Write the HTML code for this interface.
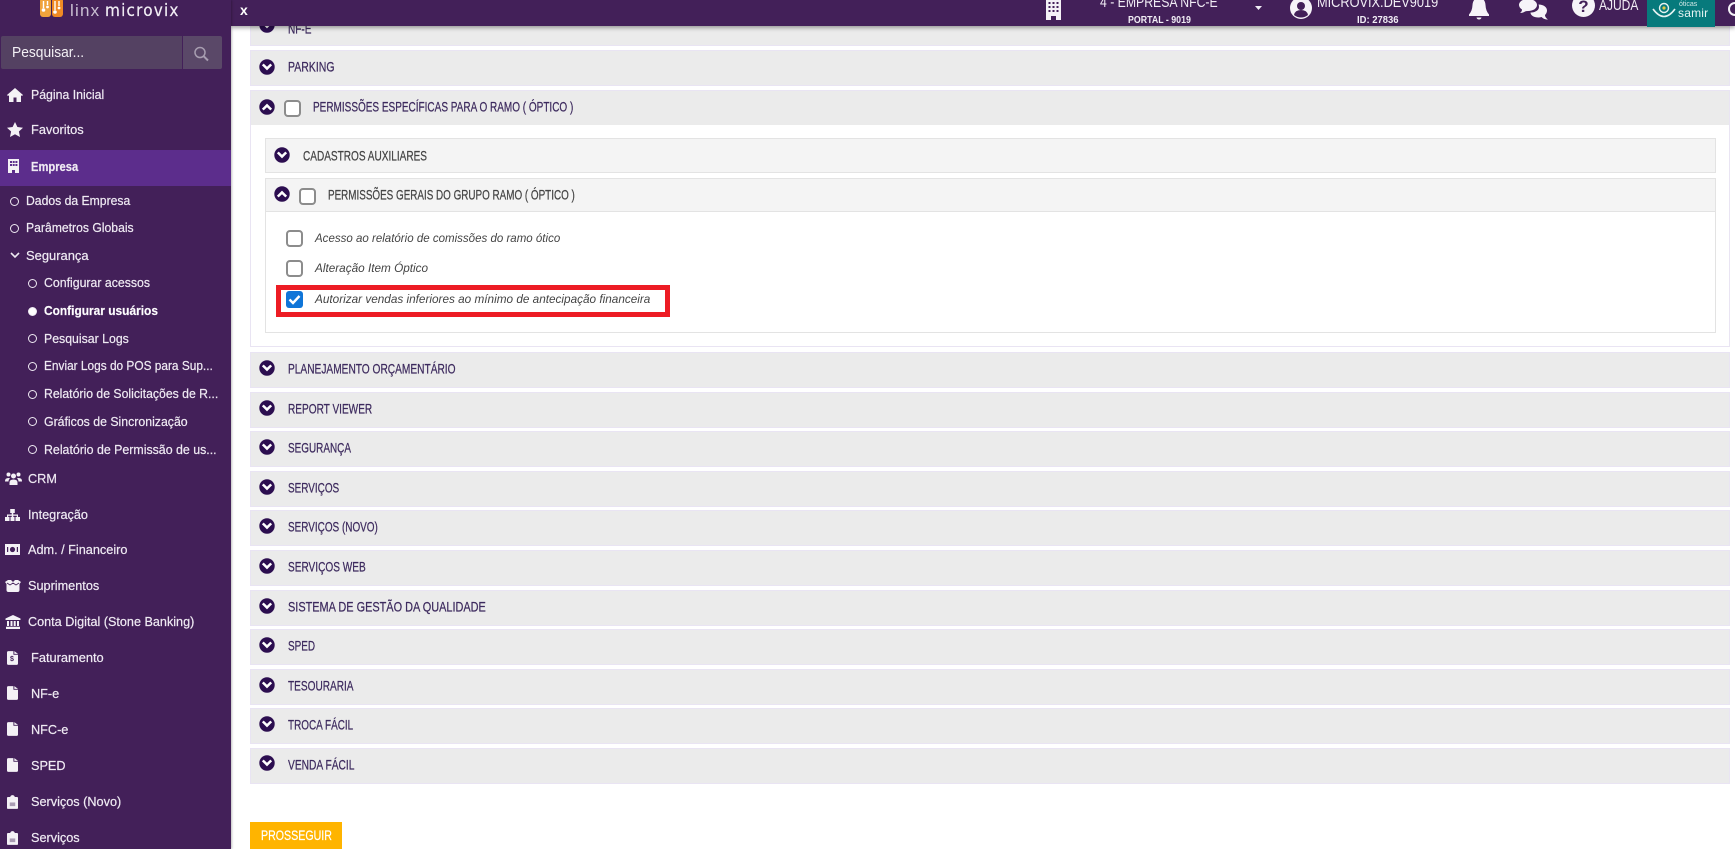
<!DOCTYPE html>
<html lang="pt-BR"><head><meta charset="utf-8"><title>Linx Microvix</title>
<style>
*{box-sizing:border-box}
html,body{margin:0;padding:0;width:1735px;height:849px;overflow:hidden;background:#fff;font-family:"Liberation Sans",sans-serif}
.a{position:absolute}
#side{position:absolute;left:0;top:0;width:231px;height:849px;background:#432059;box-shadow:1px 0 2px rgba(0,0,0,.25);z-index:3}
#top{position:absolute;left:231px;top:0;width:1504px;height:26px;background:#432059;box-shadow:0 2px 4px rgba(0,0,0,.35);z-index:2}
.m{position:absolute;white-space:nowrap;color:#efeaf3;font-size:12.7px;line-height:16px;height:16px;transform-origin:left center;transform:scaleX(var(--s,1));-webkit-text-stroke:.2px #efeaf3}
.ic{position:absolute;fill:#f4f1f6}
.dot{position:absolute;width:9px;height:9px;border:1.4px solid #efeaf3;border-radius:50%}
.p{position:absolute;left:250px;width:1480px;background:#ebebeb;border:1.5px solid #e9e4f3;height:36px}
.t{position:absolute;white-space:nowrap;font-size:14px;line-height:16px;color:#3d2a5e;transform-origin:left center;transform:translateY(-.7px) scaleX(var(--s,.72));-webkit-text-stroke:.25px #3d2a5e}
.ck{position:absolute;width:17px;height:17px;background:#fff;border:2px solid #8c8c8c;border-radius:4px}
.i{position:absolute;white-space:nowrap;font-style:italic;font-size:12px;line-height:16px;color:#444;transform-origin:left center;transform:scaleX(var(--s,.98))}
.tw{position:absolute;white-space:nowrap;color:#f1edf5;transform-origin:left center;transform:scaleX(var(--s,1))}
svg{display:block}
</style></head><body>
<svg width="0" height="0" style="position:absolute"><defs>
<symbol id="cd" viewBox="0 0 16 16"><circle cx="8" cy="8" r="7.700" fill="#2c0e50"/><path d="M2.900 6.300 8 11.400l5.100-5.100-1.800-1.700L8 7.800 4.700 4.600z" fill="#fff"/></symbol>
<symbol id="cu" viewBox="0 0 16 16"><circle cx="8" cy="8" r="7.700" fill="#2c0e50"/><path d="M2.900 9.700 8 4.600l5.100 5.100-1.800 1.700L8 8.200l-3.300 3.200z" fill="#fff"/></symbol>
<symbol id="doc" viewBox="0 0 12 15"><path d="M0 1.500Q0 0 1.500 0H7v4h5v9.500Q12 15 10.500 15h-9Q0 15 0 13.500zM8 0l4 3H8z"/></symbol>
<symbol id="clip" viewBox="0 0 12 15"><path d="M1 2h2.500Q4 0 6 0t2.500 2H11q1 0 1 1v11q0 1-1 1H1q-1 0-1-1V3q0-1 1-1z"/><path d="M3 8h6v4H3z" fill="#a99bb3"/></symbol>
</defs></svg>

<div id="top"></div>
<div id="side"></div>

<!-- Logo -->
<svg class="a" style="left:40px;top:0;z-index:4" width="23" height="18" viewBox="0 0 23 18"><rect x="0" y="-2" width="11" height="19" rx="3" fill="#f0a33c"/><rect x="12" y="-2" width="11" height="19" rx="3" fill="#f08a24"/><path d="M3.500 1v7M7.500 1v4M15 1v9M19 1v5" stroke="#fff" stroke-width="1.400" fill="none"/><circle cx="3.500" cy="10" r="1.800" fill="#fff"/><circle cx="7.500" cy="7" r="1.400" fill="#fff"/><circle cx="15" cy="12" r="1.800" fill="#fff"/><circle cx="19" cy="8" r="1.400" fill="#fff"/></svg>
<div class="a" style="left:70px;top:1px;z-index:4;color:#c9bfd2;font-size:17px;line-height:20px;letter-spacing:1.200px;white-space:nowrap">linx</div>
<div class="a" style="left:105px;top:1px;z-index:4;color:#f2eef5;font-size:17px;line-height:20px;letter-spacing:1.300px;white-space:nowrap;font-family:'DejaVu Sans',sans-serif;transform:scaleX(.9);transform-origin:left;-webkit-text-stroke:.2px #f2eef5">microvix</div>

<!-- Search -->
<div class="a" style="left:1px;top:36px;width:181px;height:33px;background:#544162;border-radius:2px 0 0 2px;z-index:4"></div>
<div class="a" style="left:12px;top:36px;z-index:4;color:#f3f0f5;font-size:15px;line-height:33px;transform:scaleX(.92);transform-origin:left;white-space:nowrap">Pesquisar...</div>
<div class="a" style="left:183px;top:36px;width:39px;height:33px;background:#5a4868;border-radius:0 2px 2px 0;z-index:4"></div>
<svg class="a" style="left:193px;top:46px;z-index:4" width="17" height="16" viewBox="0 0 17 16"><circle cx="7" cy="6.500" r="5" fill="none" stroke="#a79db0" stroke-width="1.500"/><path d="M10.800 10.300 15 14.500" stroke="#a79db0" stroke-width="2"/></svg>

<div class="a" style="left:0;top:150px;width:231px;height:36px;background:#5c2d8c;z-index:4"></div>

<div style="position:absolute;left:0;top:0;z-index:5">
<svg class="ic" style="left:7px;top:88px" width="16" height="14" viewBox="0 0 16 14"><path d="M8 0 0 7l1 1 1-.8V14h4.500V9.500h3V14H14V7.200l1 .8 1-1z"/></svg>
<div class="m" style="left:31px;top:87px;--s:.97">Página Inicial</div>
<svg class="ic" style="left:7px;top:122px" width="16" height="15" viewBox="0 0 16 15"><path d="M8 0l2.400 5 5.600.7-4.100 3.800 1.100 5.500L8 12.300 3 15l1.100-5.500L0 5.700 5.600 5z"/></svg>
<div class="m" style="left:31px;top:122px;--s:1.01">Favoritos</div>
<svg class="ic" style="left:8px;top:159px" width="11" height="14" viewBox="0 0 11 14"><path d="M0 0h11v14H7v-3H4v3H0z"/><path d="M2 2h2v2H2zM4.700 2h2v2h-2zM7.400 2h2v2h-2zM2 5h2v2H2zM4.700 5h2v2h-2zM7.400 5h2v2h-2z" fill="#5c2d8c"/></svg>
<div class="m" style="left:31px;top:159px;font-weight:700;--s:.88">Empresa</div>

<div class="dot" style="left:10px;top:197px"></div><div class="m" style="left:26px;top:193px;--s:.96">Dados da Empresa</div>
<div class="dot" style="left:10px;top:224px"></div><div class="m" style="left:26px;top:220px;--s:.96">Parâmetros Globais</div>
<svg class="a" style="left:10px;top:252px" width="10" height="7" viewBox="0 0 10 7"><path d="M1 1l4 4 4-4" fill="none" stroke="#efeaf3" stroke-width="1.600"/></svg>
<div class="m" style="left:26px;top:248px;--s:1.02">Segurança</div>

<div class="dot" style="left:28px;top:279px"></div><div class="m" style="left:44px;top:275px;--s:.97">Configurar acessos</div>
<div class="dot" style="left:28px;top:307px;background:#fff"></div><div class="m" style="left:44px;top:303px;font-weight:700;--s:.94;color:#fff">Configurar usuários</div>
<div class="dot" style="left:28px;top:334px"></div><div class="m" style="left:44px;top:331px;--s:.97">Pesquisar Logs</div>
<div class="dot" style="left:28px;top:362px"></div><div class="m" style="left:44px;top:358px;--s:.935">Enviar Logs do POS para Sup...</div>
<div class="dot" style="left:28px;top:390px"></div><div class="m" style="left:44px;top:386px;--s:.965">Relatório de Solicitações de R...</div>
<div class="dot" style="left:28px;top:417px"></div><div class="m" style="left:44px;top:414px;--s:.97">Gráficos de Sincronização</div>
<div class="dot" style="left:28px;top:445px"></div><div class="m" style="left:44px;top:442px;--s:.975">Relatório de Permissão de us...</div>

<svg class="ic" style="left:5px;top:472px" width="17" height="13" viewBox="0 0 17 13"><circle cx="3.500" cy="2.500" r="2"/><circle cx="13.500" cy="2.500" r="2"/><circle cx="8.500" cy="4" r="2.500"/><path d="M0 9q0-3 3.500-3 1 0 1.500.5Q3.500 7.500 3.500 9.500H0zM17 9q0-3-3.500-3-1 0-1.500.5 1.500 1 1.500 3H17zM4.500 13v-2.500q0-3 4-3t4 3V13z"/></svg>
<div class="m" style="left:28px;top:471px">CRM</div>
<svg class="ic" style="left:5px;top:509px" width="15" height="12" viewBox="0 0 15 12"><path d="M5.200 0h4.600v4H8.300v1.500h4.700V8h2v4h-4.500V8h1.300V6.800H8.300V8h1.200v4h-4V8h1.200V6.800H3.200V8h1.300v4H0V8h2V5.500h4.700V4H5.200z"/></svg>
<div class="m" style="left:28px;top:507px">Integração</div>
<svg class="a" style="left:5px;top:544px" width="15" height="11" viewBox="0 0 15 11"><rect width="15" height="11" fill="#f4f1f6"/><circle cx="7.500" cy="5.500" r="2.600" fill="#432059"/><path d="M2 3h1.200v5H2zM11.800 3H13v5h-1.200z" fill="#432059"/></svg>
<div class="m" style="left:28px;top:542px">Adm. / Financeiro</div>
<svg class="ic" style="left:5px;top:580px" width="16" height="12" viewBox="0 0 16 12"><path d="M0 2 3 0h3L8 2l2-2h3l3 2-1.500 2v6q0 2-2 2h-9q-2 0-2-2V4z"/><path d="M2 3l3 2L8 3l3 2 3-2" stroke="#432059" fill="none" stroke-width=".9"/></svg>
<div class="m" style="left:28px;top:578px">Suprimentos</div>
<svg class="ic" style="left:5px;top:615px" width="16" height="14" viewBox="0 0 16 14"><path d="M8 0l7.500 3.500V5H.5V3.500zM2 6h2v5H2zM5.500 6h2v5h-2zM8.700 6h2v5h-2zM12 6h2v5h-2zM1 11.800h14V14H1z"/></svg>
<div class="m" style="left:28px;top:614px;--s:.995">Conta Digital (Stone Banking)</div>
<svg class="ic" style="left:7px;top:651px" width="11" height="14"><use href="#doc"/></svg>
<div class="a" style="left:10px;top:656px;font-size:7px;line-height:8px;color:#432059;font-weight:700">$</div>
<div class="m" style="left:31px;top:650px;--s:1.01">Faturamento</div>
<svg class="ic" style="left:7px;top:686px" width="11" height="14"><use href="#doc"/></svg>
<div class="m" style="left:31px;top:686px">NF-e</div>
<svg class="ic" style="left:7px;top:722px" width="11" height="14"><use href="#doc"/></svg>
<div class="m" style="left:31px;top:722px">NFC-e</div>
<svg class="ic" style="left:7px;top:758px" width="11" height="14"><use href="#doc"/></svg>
<div class="m" style="left:31px;top:758px">SPED</div>
<svg class="ic" style="left:7px;top:795px" width="11" height="14"><use href="#clip"/></svg>
<div class="m" style="left:31px;top:794px">Serviços (Novo)</div>
<svg class="ic" style="left:7px;top:831px" width="11" height="14"><use href="#clip"/></svg>
<div class="m" style="left:31px;top:830px">Serviços</div>
</div>

<!-- Top bar contents -->
<div style="position:absolute;left:0;top:0;z-index:6">
<div class="a" style="left:240px;top:2px;color:#fff;font-size:14px;font-weight:700;line-height:16px">x</div>
<svg class="a" style="left:1046px;top:0" width="15" height="20" viewBox="0 0 15 20"><path d="M0-1h15v21h-5v-4H5v4H0z" fill="#f4f1f6"/><path d="M2.500 2h2v2h-2zM6.500 2h2v2h-2zM10.500 2h2v2h-2zM2.500 6h2v2h-2zM6.500 6h2v2h-2zM10.500 6h2v2h-2zM2.500 10h2v2h-2zM6.500 10h2v2h-2zM10.500 10h2v2h-2z" fill="#432059"/></svg>
<div class="tw" style="left:1100px;top:-5px;font-size:15px;line-height:16px;--s:.816">4 - EMPRESA NFC-E</div>
<div class="tw" style="left:1128px;top:14px;font-size:10.500px;line-height:12px;font-weight:700;--s:.84">PORTAL - 9019</div>
<svg class="a" style="left:1255px;top:6px" width="7" height="4"><path d="M0 0h7L3.500 4z" fill="#f1edf5"/></svg>
<svg class="a" style="left:1290px;top:-3px" width="22" height="22" viewBox="0 0 22 22"><circle cx="11" cy="11" r="11" fill="#f6f3f8"/><circle cx="11" cy="9" r="4" fill="#432059"/><path d="M4 18q1-5 7-5t7 5q-3 2.500-7 2.500T4 18z" fill="#432059"/></svg>
<div class="tw" style="left:1317px;top:-5px;font-size:15px;line-height:16px;--s:.85">MICROVIX.DEV9019</div>
<div class="tw" style="left:1357px;top:13.500px;font-size:10.500px;line-height:12px;font-weight:700;--s:.9">ID: 27836</div>
<svg class="a" style="left:1469px;top:-2px" width="20" height="22" viewBox="0 0 20 22"><path d="M10 0q6 0 6.500 7 .3 6 3.500 9.500V18H0v-1.500Q3.200 13 3.500 7 4 0 10 0z" fill="#f6f3f8"/><path d="M7.500 19.500h5q-.5 2-2.500 2t-2.500-2z" fill="#f6f3f8"/></svg>
<svg class="a" style="left:1519px;top:-1px" width="29" height="21" viewBox="0 0 29 21"><path d="M9 0c5 0 9 2.500 9 6s-4 6-9 6q-2 0-3 .5Q4 14 1 14q2-1.500 2-3.500Q0 8.500 0 6c0-3.500 4-6 9-6z" fill="#f6f3f8"/><path d="M19.500 5.500c5 0 8.500 2.500 8.500 6 0 2-1 3.500-2 4.500 0 2 1.500 3.500 3 4.500-3 0-5-1-6.500-2.500q-1.500.5-3 .5c-4.500 0-8-2-8-5 5.500 0 10-3 8-8z" fill="#f6f3f8"/></svg>
<svg class="a" style="left:1572px;top:-6px" width="23" height="23" viewBox="0 0 23 23"><circle cx="11.500" cy="11.500" r="11.500" fill="#f6f3f8"/><text x="11.500" y="18" text-anchor="middle" font-family="Liberation Sans" font-weight="700" font-size="17" fill="#432059">?</text></svg>
<div class="tw" style="left:1599px;top:-2px;font-size:15px;line-height:16px;--s:.8">AJUDA</div>
<div class="a" style="left:1647px;top:0;width:68px;height:27px;background:#077a7c"></div>
<svg class="a" style="left:1650px;top:1px" width="28" height="20" viewBox="0 0 28 20"><path d="M3 8q11 15 22 0" fill="none" stroke="#e6f3f2" stroke-width="1.600"/><circle cx="14" cy="7" r="4.500" fill="none" stroke="#e6f3f2" stroke-width="1.400"/><circle cx="14" cy="7" r="1.600" fill="#e3c843"/></svg>
<div class="a" style="left:1679px;top:1px;color:#cfe7e6;font-size:7px;line-height:8px;white-space:nowrap">óticas</div>
<div class="a" style="left:1678px;top:7px;color:#e6f3f2;font-size:12px;line-height:13px;white-space:nowrap;letter-spacing:.2px">samir</div>
<div class="a" style="left:1728px;top:2px;width:14px;height:14px;border:2px solid #f4f1f6;border-radius:50%"></div>
</div>

<!-- Panels -->
<div class="p" style="top:10px;border-top:0"></div>
<svg class="a" style="left:259px;top:17px;z-index:1" width="16" height="16"><use href="#cd"/></svg>
<div class="t" style="left:288px;top:21px">NF-E</div>

<div class="p" style="top:50px"></div>
<svg class="a" style="left:259px;top:59px" width="16" height="16"><use href="#cd"/></svg>
<div class="t" style="left:288px;top:59px;--s:.75">PARKING</div>

<div class="p" style="top:90px;height:257px;background:#fff"></div>
<div class="a" style="left:251px;top:91px;width:1478px;height:34px;background:#ebebeb"></div>
<svg class="a" style="left:259px;top:99px" width="16" height="16"><use href="#cu"/></svg>
<div class="ck" style="left:284px;top:100px"></div>
<div class="t" style="left:313px;top:99px;--s:.714">PERMISSÕES ESPECÍFICAS PARA O RAMO ( ÓPTICO )</div>

<div class="a" style="left:265px;top:138px;width:1451px;height:35px;background:#f4f4f4;border:1px solid #e3e3e3"></div>
<svg class="a" style="left:274px;top:147px" width="16" height="16"><use href="#cd"/></svg>
<div class="t" style="left:303px;top:148px;color:#444;-webkit-text-stroke-color:#444;--s:.718">CADASTROS AUXILIARES</div>

<div class="a" style="left:265px;top:178px;width:1451px;height:155px;background:#fff;border:1px solid #e3e3e3"></div>
<div class="a" style="left:266px;top:179px;width:1449px;height:33px;background:#f4f4f4;border-bottom:1px solid #e3e3e3"></div>
<svg class="a" style="left:274px;top:186px" width="16" height="16"><use href="#cu"/></svg>
<div class="ck" style="left:299px;top:188px"></div>
<div class="t" style="left:328px;top:187px;color:#444;-webkit-text-stroke-color:#444;--s:.705">PERMISSÕES GERAIS DO GRUPO RAMO ( ÓPTICO )</div>

<div class="ck" style="left:286px;top:230px"></div>
<div class="i" style="left:315px;top:230px;--s:.96">Acesso ao relatório de comissões do ramo ótico</div>
<div class="ck" style="left:286px;top:260px"></div>
<div class="i" style="left:315px;top:260px">Alteração Item Óptico</div>
<div class="a" style="left:276px;top:285px;width:394px;height:32px;border:5px solid #ed1c24"></div>
<svg class="a" style="left:286px;top:291px" width="17" height="17" viewBox="0 0 17 17"><rect width="17" height="17" rx="3" fill="#0f75d8"/><path d="M3.500 8.500 7 12l6.500-7" fill="none" stroke="#fff" stroke-width="2.400"/></svg>
<div class="i" style="left:315px;top:291px">Autorizar vendas inferiores ao mínimo de antecipação financeira</div>

<div class="p" style="top:352px"></div><svg class="a" style="left:259px;top:360px" width="16" height="16"><use href="#cd"/></svg><div class="t" style="left:288px;top:361px;--s:.726">PLANEJAMENTO ORÇAMENTÁRIO</div>
<div class="p" style="top:391.600px"></div><svg class="a" style="left:259px;top:399.600px" width="16" height="16"><use href="#cd"/></svg><div class="t" style="left:288px;top:400.600px">REPORT VIEWER</div>
<div class="p" style="top:431.200px"></div><svg class="a" style="left:259px;top:439.200px" width="16" height="16"><use href="#cd"/></svg><div class="t" style="left:288px;top:440.200px;--s:.71">SEGURANÇA</div>
<div class="p" style="top:470.800px"></div><svg class="a" style="left:259px;top:478.800px" width="16" height="16"><use href="#cd"/></svg><div class="t" style="left:288px;top:479.800px;--s:.71">SERVIÇOS</div>
<div class="p" style="top:510.400px"></div><svg class="a" style="left:259px;top:518.400px" width="16" height="16"><use href="#cd"/></svg><div class="t" style="left:288px;top:519.400px;--s:.71">SERVIÇOS (NOVO)</div>
<div class="p" style="top:550px"></div><svg class="a" style="left:259px;top:558px" width="16" height="16"><use href="#cd"/></svg><div class="t" style="left:288px;top:559px">SERVIÇOS WEB</div>
<div class="p" style="top:589.600px"></div><svg class="a" style="left:259px;top:597.600px" width="16" height="16"><use href="#cd"/></svg><div class="t" style="left:288px;top:598.600px;--s:.78">SISTEMA DE GESTÃO DA QUALIDADE</div>
<div class="p" style="top:629.200px"></div><svg class="a" style="left:259px;top:637.200px" width="16" height="16"><use href="#cd"/></svg><div class="t" style="left:288px;top:638.200px;--s:.71">SPED</div>
<div class="p" style="top:668.800px"></div><svg class="a" style="left:259px;top:676.800px" width="16" height="16"><use href="#cd"/></svg><div class="t" style="left:288px;top:677.800px">TESOURARIA</div>
<div class="p" style="top:708.400px"></div><svg class="a" style="left:259px;top:716.400px" width="16" height="16"><use href="#cd"/></svg><div class="t" style="left:288px;top:717.400px;--s:.71">TROCA FÁCIL</div>
<div class="p" style="top:748px"></div><svg class="a" style="left:259px;top:755px" width="16" height="16"><use href="#cd"/></svg><div class="t" style="left:288px;top:757px;--s:.73">VENDA FÁCIL</div>

<div class="a" style="left:250px;top:822px;width:92px;height:27px;background:#ffb400"></div>
<div class="a" style="left:261px;top:822px;color:#fff;font-size:14px;line-height:27px;white-space:nowrap;transform:scaleX(.76);transform-origin:left;-webkit-text-stroke:.2px #fff">PROSSEGUIR</div>
</body></html>
